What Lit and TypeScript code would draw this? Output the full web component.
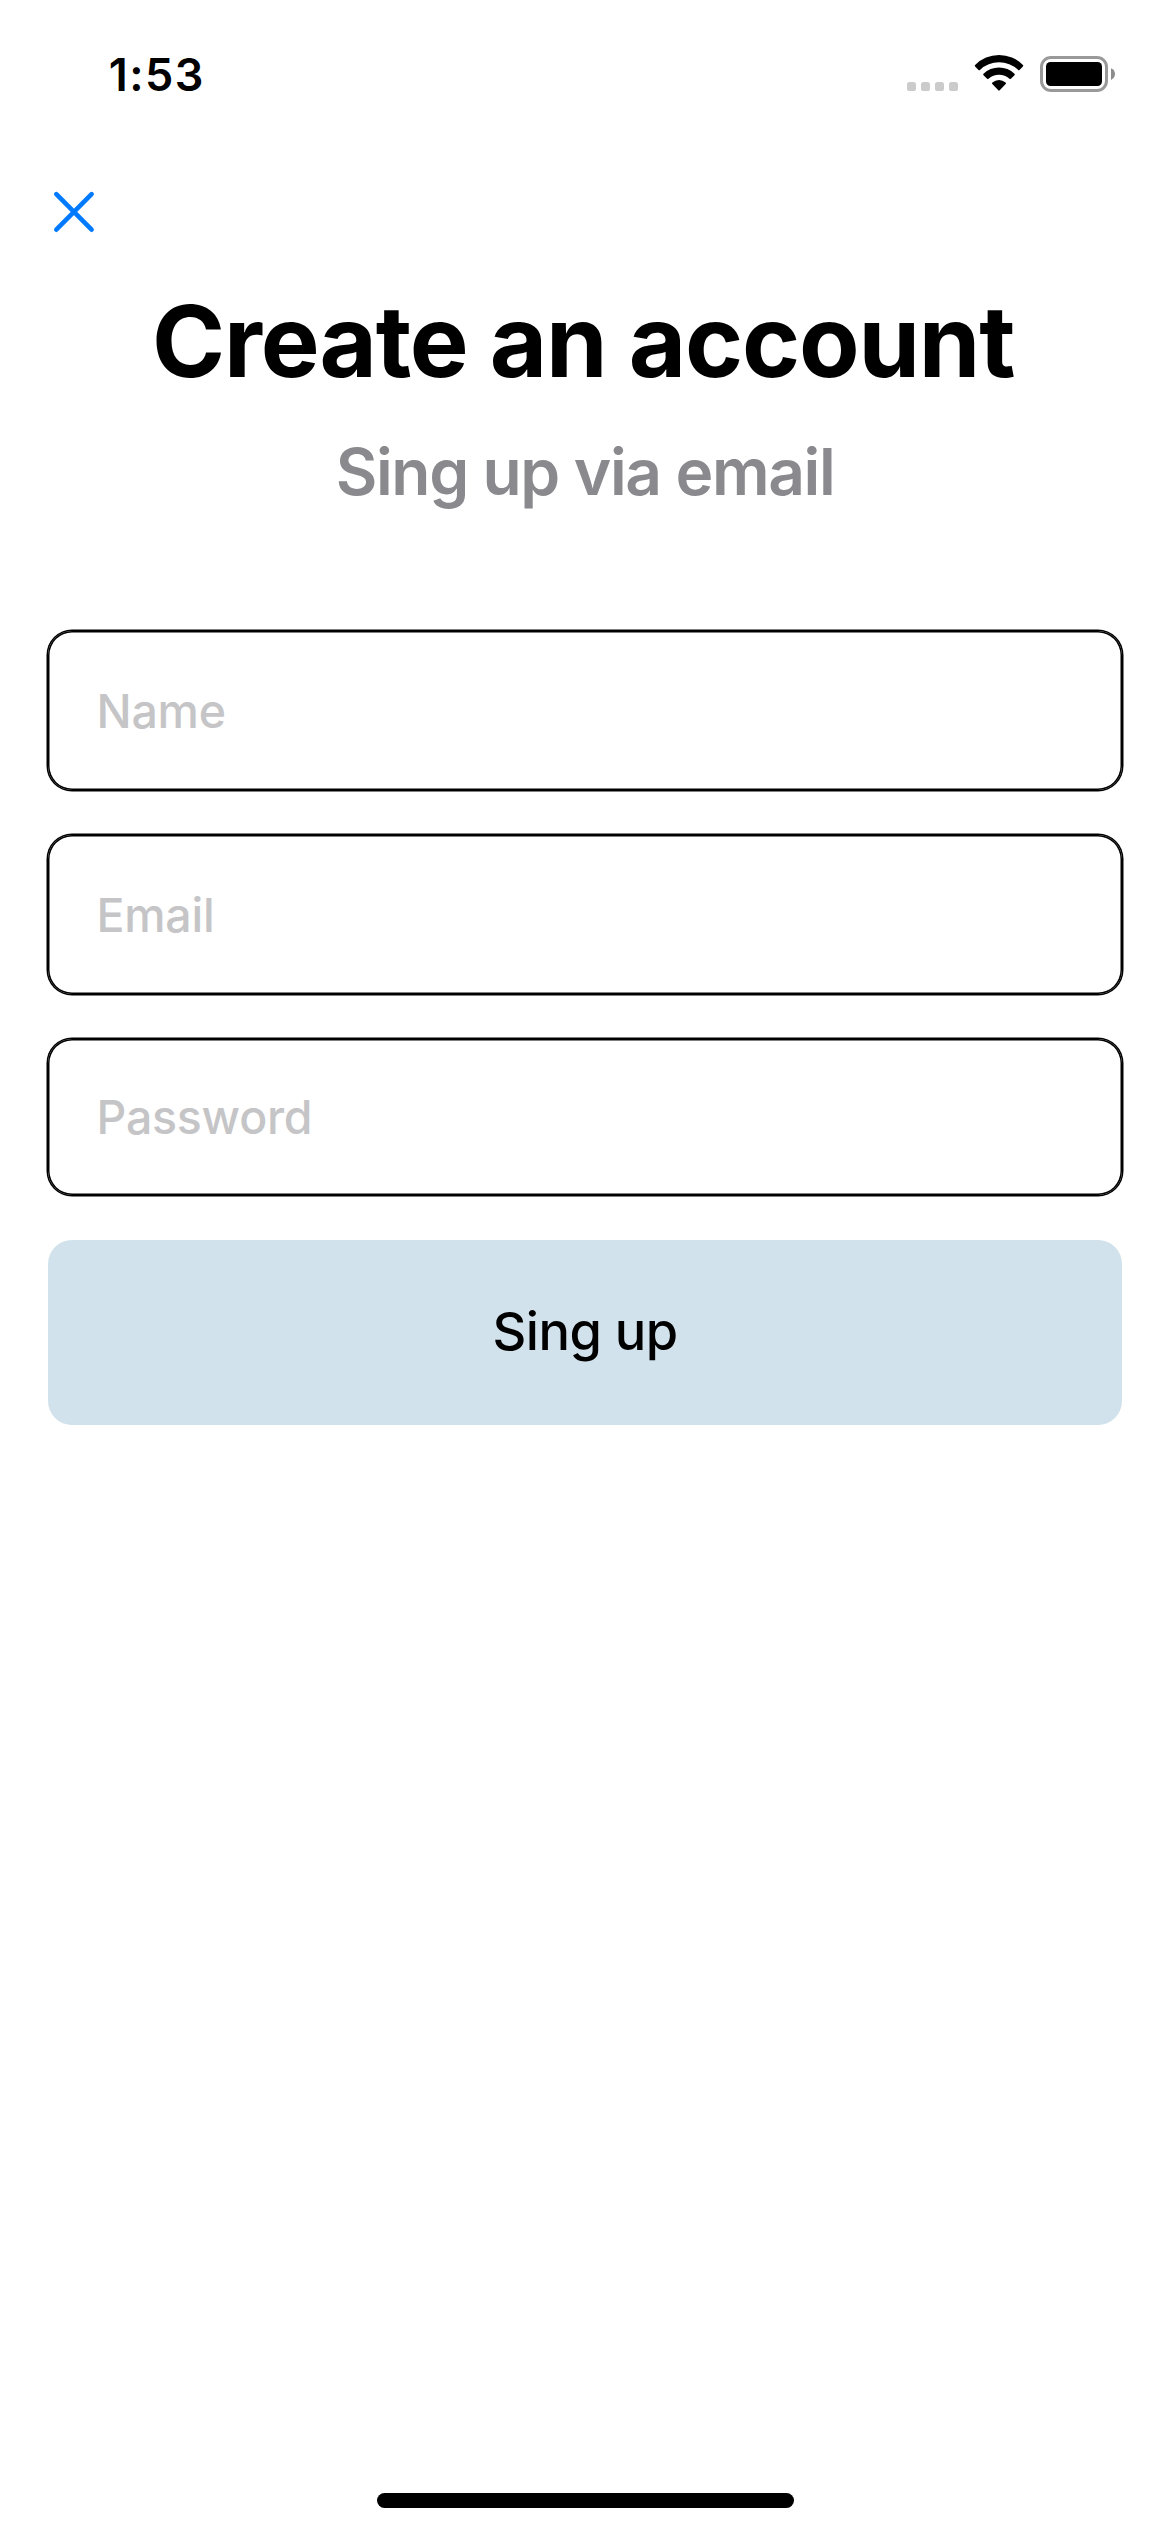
import { LitElement, html, css } from "lit";
import { customElement, property } from "lit/decorators.js";

@customElement("status-bar")
export class StatusBar extends LitElement {
  @property() time = "";

  static styles = css`
    :host {
      display: flex;
      justify-content: space-between;
      align-items: center;
      height: 148px;
      box-sizing: border-box;
      padding: 0 54px 0 108.7px;
      color: #000;
    }
    .time {
      font-size: 45px;
      font-weight: 600;
      line-height: 60px;
      letter-spacing: 1.5px;
      padding-top: 2px;
    }
    .icons {
      display: block;
      width: 210px;
      height: 40px;
    }
  `;

  render() {
    return html`
      <span class="time">${this.time}</span>
      <svg class="icons" viewBox="906 54 210 40" aria-hidden="true">
        <g fill="#cbcbcb">
          <rect x="907" y="82" width="9" height="9" rx="2.6" />
          <rect x="921" y="82" width="9" height="9" rx="2.6" />
          <rect x="935" y="82" width="9" height="9" rx="2.6" />
          <rect x="949" y="82" width="9" height="9" rx="2.6" />
        </g>
        <g fill="#000">
          <path d="M975.1 65 A33.3 33.3 0 0 1 1022.9 65 Q1023.6 65.7 1022.9 66.4 L1019.5 69.9 Q1018.8 70.5 1018.1 69.9 A28 28 0 0 0 979.9 69.9 Q979.2 70.5 978.5 69.9 L975.1 66.4 Q974.4 65.7 975.1 65 Z" />
          <path d="M983.5 73.8 A22 22 0 0 1 1014.5 73.8 Q1015.2 74.5 1014.5 75.2 L1010.9 78.8 Q1010.2 79.4 1009.5 78.8 A15.8 15.8 0 0 0 988.5 78.8 Q987.8 79.4 987.1 78.8 L983.5 75.2 Q982.8 74.5 983.5 73.8 Z" />
          <path d="M992.4 82.6 A9.8 9.8 0 0 1 1005.6 82.6 Q1006.4 83.3 1005.7 84 L999.7 90.3 Q999 91 998.3 90.3 L992.3 84 Q991.6 83.3 992.4 82.6 Z" />
        </g>
        <rect x="1041.5" y="57.5" width="65" height="33" rx="9.5" fill="none" stroke="#999" stroke-width="3" />
        <rect x="1046" y="62" width="56" height="24" rx="4.5" fill="#000" />
        <path d="M1111 68.3 C1113.6 69.3 1115 71.6 1115 74.1 C1115 76.6 1113.6 78.9 1111 79.9 Z" fill="#8c8c8c" />
      </svg>
    `;
  }
}

@customElement("text-field")
export class TextField extends LitElement {
  @property() label = "";
  @property() type = "text";

  static styles = css`
    :host {
      display: flex;
      border-radius: 24px;
      box-shadow: 0 0 0 1.5px #000, inset 0 0 0 1.5px #000;
    }
    .input {
      flex: 1;
      min-width: 0;
      box-sizing: border-box;
      border: 0;
      outline: 0;
      margin: 0;
      padding: 0 48px 0 48.5px;
      background: transparent;
      font-family: inherit;
      font-size: 46.5px;
      font-weight: 500;
      letter-spacing: -0.25px;
      color: #000;
    }
    .input::placeholder {
      color: #c5c5c7;
      opacity: 1;
    }
  `;

  render() {
    return html`<input class="input" type=${this.type} placeholder=${this.label} aria-label=${this.label} />`;
  }
}

@customElement("app-root")
export class AppRoot extends LitElement {
  static styles = css`
    :host {
      display: flex;
      flex-direction: column;
      height: 2532px;
      box-sizing: border-box;
      overflow: hidden;
      background: #fff;
      font-family: Inter, "Liberation Sans", sans-serif;
    }
    .toolbar {
      display: flex;
      height: 133px;
      padding: 40px 0 0 50px;
      box-sizing: border-box;
    }
    .close {
      display: block;
      width: 48px;
      height: 48px;
      padding: 0;
      border: 0;
      background: none;
    }
    .glyph {
      display: block;
      width: 48px;
      height: 48px;
    }
    .title {
      margin: 0;
      padding-right: 3.7px;
      font-size: 98.9px;
      font-weight: 700;
      line-height: 120px;
      letter-spacing: -1.16px;
      text-align: center;
      color: #000;
    }
    .subtitle {
      margin: 31px 0 0;
      font-size: 64px;
      font-weight: 600;
      line-height: 80px;
      letter-spacing: -1.37px;
      text-align: center;
      color: #8a8a8e;
    }
    .form {
      display: flex;
      flex-direction: column;
      gap: 45px;
      padding: 119px 48px 0;
    }
    .field {
      height: 159px;
    }
    .field.secure {
      height: 156px;
    }
    .submit {
      height: 185px;
      margin: 0;
      padding: 0 0 3px;
      border: 0;
      border-radius: 24px;
      background: #d1e2ec;
      color: #000;
      font-family: inherit;
      font-size: 52.4px;
      font-weight: 500;
      letter-spacing: -0.55px;
    }
    .home {
      width: 417px;
      height: 15px;
      margin: auto auto 24px;
      border-radius: 7.5px;
      background: #000;
    }
  `;

  render() {
    return html`
      <status-bar time="1:53"></status-bar>
      <div class="toolbar">
        <button class="close" aria-label="Close">
          <svg class="glyph" viewBox="50 188 48 48">
            <path d="M56.3 194.2 L91.6 229.7 M91.6 194.2 L56.3 229.7" stroke="#007aff" stroke-width="4.6" stroke-linecap="round" />
          </svg>
        </button>
      </div>
      <h1 class="title">Create an account</h1>
      <p class="subtitle">Sing up via email</p>
      <form class="form">
        <text-field class="field" label="Name"></text-field>
        <text-field class="field" label="Email"></text-field>
        <text-field class="field secure" label="Password" type="password"></text-field>
        <button class="submit" type="button">Sing up</button>
      </form>
      <div class="home"></div>
    `;
  }
}
